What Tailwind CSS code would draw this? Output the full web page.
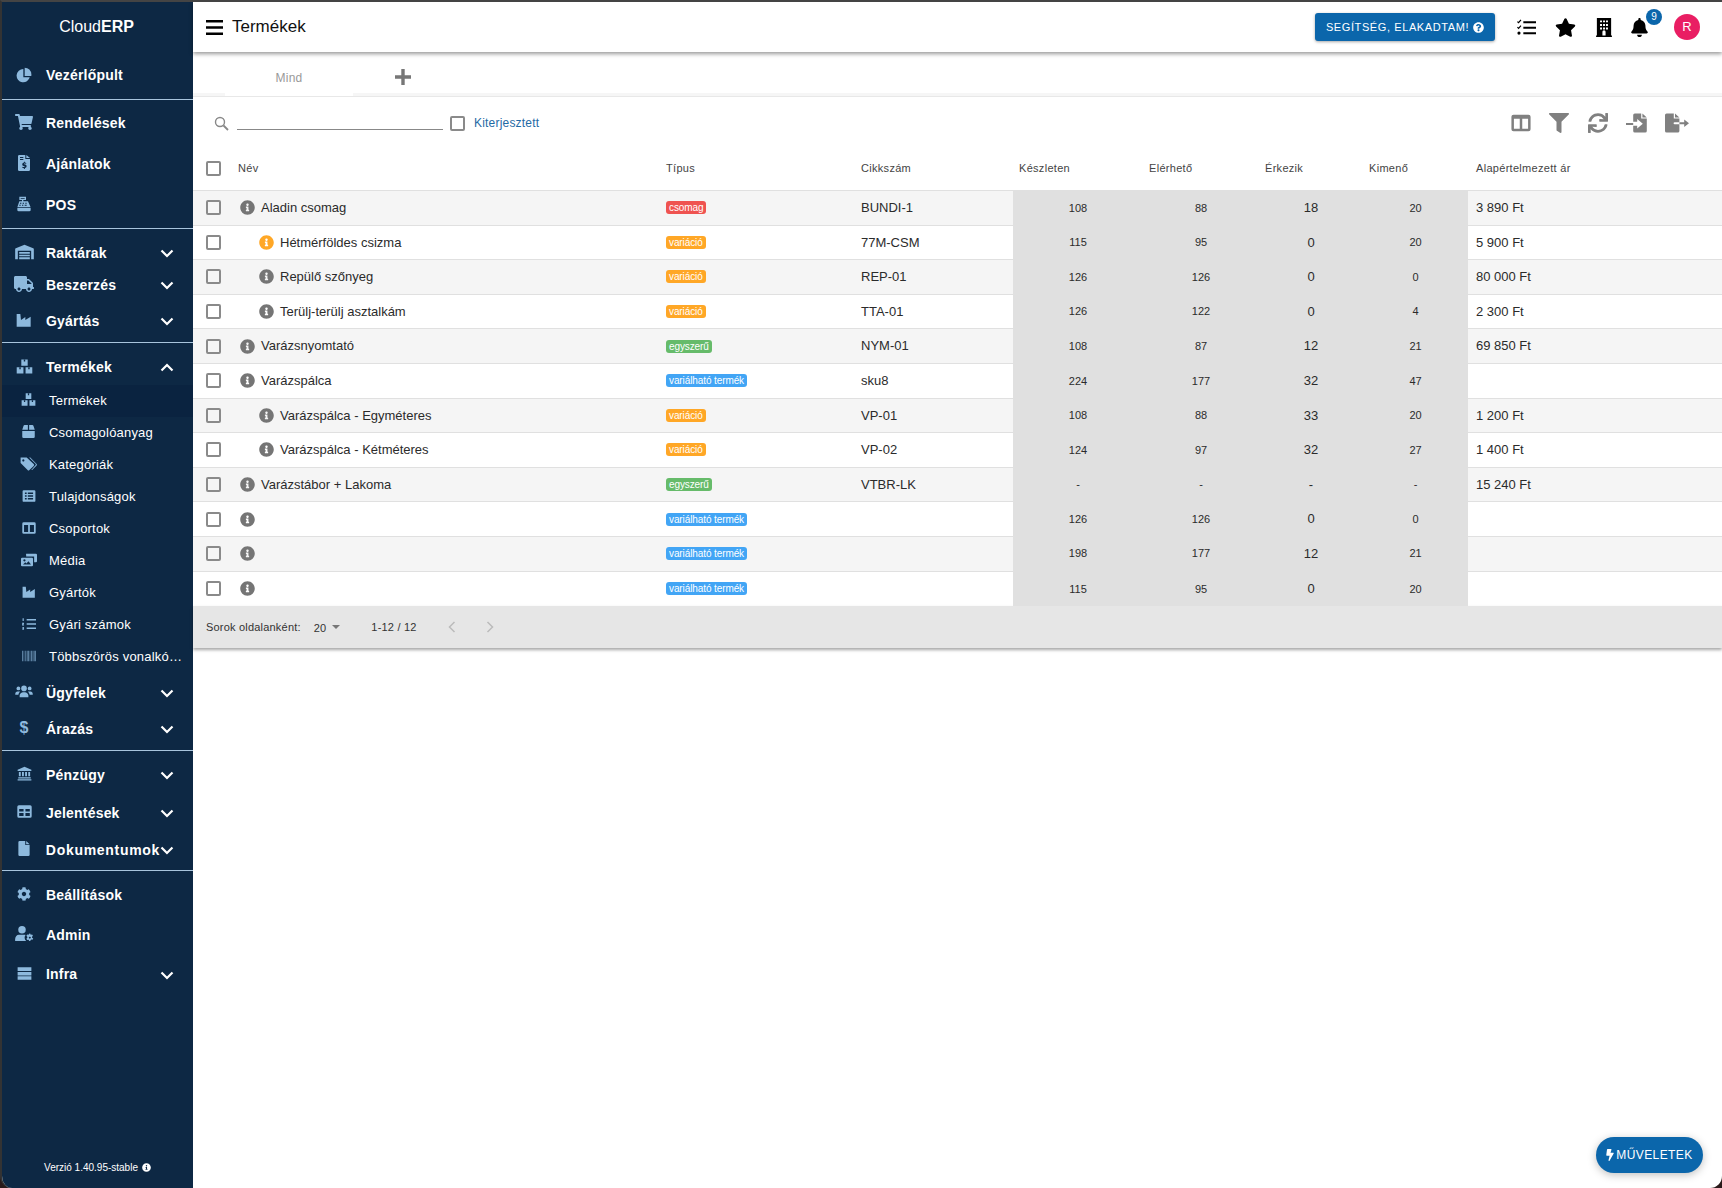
<!DOCTYPE html>
<html lang="hu">
<head>
<meta charset="UTF-8">
<title>CloudERP - Termékek</title>
<script src="https://cdn.jsdelivr.net/npm/@tailwindcss/browser@4"></script>
</head>
<body class="bg-[#2a1a1a] font-['Liberation_Sans',Arial,sans-serif] overflow-hidden">
<!-- icon sprite -->
<svg class="hidden">
<symbol id="info" viewBox="0 0 512 512"><path d="M256 8C119.043 8 8 119.083 8 256c0 136.997 111.043 248 248 248s248-111.003 248-248C504 119.083 392.957 8 256 8zm0 110c23.196 0 42 18.804 42 42s-18.804 42-42 42-42-18.804-42-42 18.804-42 42-42zm56 254c0 6.627-5.373 12-12 12h-88c-6.627 0-12-5.373-12-12v-24c0-6.627 5.373-12 12-12h12v-64h-12c-6.627 0-12-5.373-12-12v-24c0-6.627 5.373-12 12-12h64c6.627 0 12 5.373 12 12v100h12c6.627 0 12 5.373 12 12v24z"/></symbol>
<symbol id="star" viewBox="0 0 576 512"><path d="M259.3 17.8L194 150.2 47.9 171.5c-26.2 3.8-36.7 36.1-17.7 54.6l105.7 103-25 145.5c-4.5 26.3 23.2 46 46.4 33.7L288 439.6l130.7 68.7c23.2 12.2 50.9-7.4 46.4-33.7l-25-145.5 105.7-103c19-18.5 8.5-50.8-17.7-54.6L382 150.2 316.7 17.8c-11.7-23.6-45.6-23.9-57.4 0z"/></symbol>
<symbol id="bell" viewBox="0 0 448 512"><path d="M224 512c35.32 0 63.97-28.65 63.97-64H160.03c0 35.35 28.65 64 63.97 64zm215.39-149.71c-19.32-20.76-55.47-51.99-55.47-154.29 0-77.7-54.48-139.9-127.94-155.16V32c0-17.67-14.32-32-31.98-32s-31.98 14.33-31.98 32v20.84C118.56 68.1 64.08 130.3 64.08 208c0 102.3-36.15 133.53-55.47 154.29-6 6.45-8.66 14.16-8.61 21.71.11 16.4 12.98 32 32.1 32h383.8c19.12 0 32-15.6 32.1-32 .05-7.55-2.61-15.27-8.61-21.71z"/></symbol>
<symbol id="filter" viewBox="0 0 512 512"><path d="M487.976 0H24.028C2.71 0-8.047 25.866 7.058 40.971L192 225.941V432c0 7.831 3.821 15.17 10.237 19.662l80 55.98C298.02 518.69 320 507.493 320 487.98V225.941l184.947-184.97C520.021 25.896 509.338 0 487.976 0z"/></symbol>
<symbol id="cart" viewBox="0 0 576 512"><path d="M528.12 301.319l47.273-208C578.806 78.301 567.391 64 551.99 64H159.208l-9.166-44.81C147.758 8.021 137.93 0 126.529 0H24C10.745 0 0 10.745 0 24v16c0 13.255 10.745 24 24 24h69.883l70.248 343.435C147.325 417.1 136 435.222 136 456c0 30.928 25.072 56 56 56s56-25.072 56-56c0-15.674-6.447-29.835-16.824-40h209.647C430.447 426.165 424 440.326 424 456c0 30.928 25.072 56 56 56s56-25.072 56-56c0-22.172-12.888-41.332-31.579-50.405l5.517-24.276c3.413-15.018-8.002-29.319-23.403-29.319H218.117l-6.545-32h293.145c11.206 0 20.92-7.754 23.403-18.681z"/></symbol>
<symbol id="truck" viewBox="0 0 640 512"><path d="M624 352h-16V243.9c0-12.7-5.1-24.9-14.1-33.9L494 110.1c-9-9-21.2-14.1-33.9-14.1H416V48c0-26.5-21.5-48-48-48H48C21.5 0 0 21.5 0 48v320c0 26.5 21.5 48 48 48h16c0 53 43 96 96 96s96-43 96-96h128c0 53 43 96 96 96s96-43 96-96h48c8.8 0 16-7.2 16-16v-32c0-8.8-7.2-16-16-16zM160 464c-26.5 0-48-21.5-48-48s21.5-48 48-48 48 21.5 48 48-21.5 48-48 48zm320 0c-26.5 0-48-21.5-48-48s21.5-48 48-48 48 21.5 48 48-21.5 48-48 48zm80-208H416V144h44.1l99.9 99.9V256z"/></symbol>
<symbol id="sync" viewBox="0 0 512 512"><path d="M440.65 12.57l4 82.77A247.16 247.16 0 0 0 255.83 8C134.73 8 33.91 94.92 12.29 209.82A12 12 0 0 0 24.09 224h49.05a12 12 0 0 0 11.67-9.26 175.91 175.91 0 0 1 317-56.94l-101.46-4.86a12 12 0 0 0-12.57 12v47.41a12 12 0 0 0 12 12H500a12 12 0 0 0 12-12V12a12 12 0 0 0-12-12h-47.37a12 12 0 0 0-11.98 12.57zM255.83 432a175.61 175.61 0 0 1-146-77.8l101.8 4.87a12 12 0 0 0 12.57-12v-47.4a12 12 0 0 0-12-12H12a12 12 0 0 0-12 12V500a12 12 0 0 0 12 12h47.35a12 12 0 0 0 12-12.6l-4.15-82.57A247.17 247.17 0 0 0 255.83 504c121.11 0 221.93-86.92 243.55-201.82a12 12 0 0 0-11.8-14.18h-49.05a12 12 0 0 0-11.67 9.26A175.86 175.86 0 0 1 255.83 432z"/></symbol>
<symbol id="question" viewBox="0 0 512 512"><path d="M504 256c0 136.997-111.043 248-248 248S8 392.997 8 256C8 119.083 119.043 8 256 8s248 111.083 248 248zM262.655 90c-54.497 0-89.255 22.957-116.549 63.758-3.536 5.286-2.353 12.415 2.715 16.258l34.699 26.31c5.205 3.947 12.621 3.008 16.665-2.122 17.864-22.658 30.113-35.797 57.303-35.797 20.429 0 45.698 13.148 45.698 32.958 0 14.976-12.363 22.667-32.534 33.976C247.128 238.528 216 254.941 216 296v4c0 6.627 5.373 12 12 12h56c6.627 0 12-5.373 12-12v-1.333c0-28.462 83.186-29.647 83.186-106.667 0-58.002-60.165-102-116.531-102zM256 338c-25.365 0-46 20.635-46 46 0 25.364 20.635 46 46 46s46-20.636 46-46c0-25.365-20.635-46-46-46z"/></symbol>
<symbol id="bolt" viewBox="0 0 320 512"><path d="M296 160H180.6l42.6-129.8C227.2 15 215.7 0 200 0H56C44 0 33.8 8.9 32.2 20.8l-32 240C-1.7 275.2 9.5 288 24 288h118.7L96.6 482.5c-3.6 15.2 8 29.5 23.3 29.5 8.4 0 16.4-4.4 20.8-12l176-304c9.3-15.9-2.2-36-20.7-36z"/></symbol>
<symbol id="cog" viewBox="0 0 512 512"><path d="M487.4 315.7l-42.6-24.6c4.3-23.2 4.3-47 0-70.2l42.6-24.6c4.9-2.8 7.1-8.6 5.5-14-11.1-35.6-30-67.8-54.7-94.6-3.8-4.1-10-5.1-14.8-2.3L380.8 110c-17.9-15.4-38.5-27.3-60.8-35.1V25.8c0-5.6-3.9-10.5-9.4-11.7-36.7-8.2-74.3-7.8-109.2 0-5.5 1.2-9.4 6.1-9.4 11.7V75c-22.2 7.9-42.8 19.8-60.8 35.1L88.7 85.5c-4.9-2.8-11-1.9-14.8 2.3-24.7 26.7-43.6 58.9-54.7 94.6-1.7 5.4.6 11.2 5.5 14L67.3 221c-4.3 23.2-4.3 47 0 70.2l-42.6 24.6c-4.9 2.8-7.1 8.6-5.5 14 11.1 35.6 30 67.8 54.7 94.6 3.8 4.1 10 5.1 14.8 2.3l42.6-24.6c17.9 15.4 38.5 27.3 60.8 35.1v49.2c0 5.6 3.9 10.5 9.4 11.7 36.7 8.2 74.3 7.8 109.2 0 5.5-1.2 9.4-6.1 9.4-11.7v-49.2c22.2-7.9 42.8-19.8 60.8-35.1l42.6 24.6c4.9 2.8 11 1.9 14.8-2.3 24.7-26.7 43.6-58.9 54.7-94.6 1.5-5.5-.7-11.3-5.6-14.1zM256 336c-44.1 0-80-35.9-80-80s35.9-80 80-80 80 35.9 80 80-35.9 80-80 80z"/></symbol>
<symbol id="pie" viewBox="0 0 24 24"><path d="M11 3a10 10 0 1 0 9.6 12.5H11z"/><path d="M13 1a10 10 0 0 1 10 10v2.5H13z"/></symbol>
<symbol id="invoice" viewBox="0 0 18 24"><path fill-rule="evenodd" d="M2 0h9v6h7v16a2 2 0 0 1-2 2H2a2 2 0 0 1-2-2V2a2 2 0 0 1 2-2zM3 3v1.500h5V3zM3 6v1.500h5V6zM9 10v1.400c-1.700.3-2.600 1.400-2.600 2.700 0 3 4 2.100 4 3.300 0 .5-.7.7-1.400.7-.8 0-1.500-.3-2-.6l-.7 1.500c.6.400 1.500.7 2.700.8V21h1.300v-1.400c1.700-.3 2.600-1.400 2.600-2.700 0-3-4-2.200-4-3.300 0-.5.5-.7 1.200-.7.7 0 1.300.2 1.800.5l.7-1.500c-.6-.3-1.400-.6-2.300-.7V10z"/><path d="M12.500 0l5.500 4.600H12.500z"/></symbol>
<symbol id="register" viewBox="0 0 24 24"><path fill-rule="evenodd" d="M5 1h10v5H11v2h7l4 9H2l3-9h4V6H5zM7 3v1h6V3zM6 10v1.500h2V10zm4 0v1.500h2V10zm4 0v1.500h2V10zm-9 3v1.500h2V13zm4 0v1.500h2V13zm4 0v1.500h3V13z"/><path d="M2 18h20v3a2 2 0 0 1-2 2H4a2 2 0 0 1-2-2z"/></symbol>
<symbol id="warehouse" viewBox="0 0 28 24"><path fill-rule="evenodd" d="M14 1L27 6.500a1.500 1.500 0 0 1 1 1.400V23h-4V10H4v13H0V7.900a1.500 1.500 0 0 1 1-1.400zM6 12h16v2.500H6zm0 4h16v2.500H6zm0 4h16v3H6z"/></symbol>
<symbol id="industry" viewBox="0 0 24 24"><path d="M1 3h5.500l1 9L14 7.500V12l8-5v15H1z"/></symbol>
<symbol id="boxes" viewBox="0 0 24 24"><path d="M7.500 2h9v9h-9zM1 13h9.500v9H1zM13.500 13H23v9h-9.500z"/><path fill="#0d2844" d="M11 2h2v3h-2zM4.700 13h2v3h-2zM17.300 13h2v3h-2z"/></symbol>
<symbol id="box" viewBox="0 0 24 24"><path d="M2 9l2-6a2 2 0 0 1 2-1.500h5V9zM13 1.500h5a2 2 0 0 1 2 1.500l2 6h-9zM2 11h20v9.500a2 2 0 0 1-2 2H4a2 2 0 0 1-2-2z"/></symbol>
<symbol id="tags" viewBox="0 0 28 24"><path fill-rule="evenodd" d="M1 2h10l11.500 11a2 2 0 0 1 0 3l-7 6.500a2 2 0 0 1-3 0L1 11zM5.500 5a1.800 1.800 0 1 0 .01 0z"/><path d="M15 2h2l10 10.500a2 2 0 0 1 0 3l-7 7h-1.500l7-7.500a2 2 0 0 0 0-2.600z"/></symbol>
<symbol id="listalt" viewBox="0 0 24 24"><path fill-rule="evenodd" d="M3 2h18a2 2 0 0 1 2 2v16a2 2 0 0 1-2 2H3a2 2 0 0 1-2-2V4a2 2 0 0 1 2-2zM5 6v2.500h3V6zm5 0v2.500h9V6zm-5 4.700v2.500h3v-2.500zm5 0v2.500h9v-2.500zm-5 4.800V18h3v-2.500zm5 0V18h9v-2.500z"/></symbol>
<symbol id="columns" viewBox="0 0 24 24"><path fill-rule="evenodd" d="M3 2h18a2.500 2.500 0 0 1 2.500 2.500v15A2.500 2.500 0 0 1 21 22H3a2.500 2.500 0 0 1-2.500-2.500v-15A2.500 2.500 0 0 1 3 2zM3.500 7v12h7V7zm10 0v12h7V7z"/></symbol>
<symbol id="media" viewBox="0 0 28 24"><path d="M9 1h17a2 2 0 0 1 2 2v11a2 2 0 0 1-2 2h-3V6H9V3a2 2 0 0 1 0-2z"/><path fill-rule="evenodd" d="M2 8h17a2 2 0 0 1 2 2v11a2 2 0 0 1-2 2H2a2 2 0 0 1-2-2V10a2 2 0 0 1 2-2zm1.500 12h14l-4.500-6-3.500 4-2-2zM6 10.500a2 2 0 1 0 .01 0z"/></symbol>
<symbol id="listol" viewBox="0 0 24 24"><path d="M8 3.500h16v2.500H8zM8 10.800h16v2.500H8zM8 18h16v2.500H8zM1 2h2v5H1zM0 10h3.500v1.500l-1.500 1.500h1.500v1.500H0V13l1.500-1.500H0zM0 17h3.500v5H0v-1.200h2V20H0.500v-1H2v-.8H0z"/></symbol>
<symbol id="barcode" viewBox="0 0 24 24"><path d="M0 3h2v18H0zM3 3h1v18H3zM5.500 3h2v18h-2zM9 3h3v18H9zM13 3h1v18h-1zM15 3h3v18h-3zM19 3h1v18h-1zM21 3h3v18h-3z"/></symbol>
<symbol id="users" viewBox="0 0 28 24"><circle cx="14" cy="7" r="4.500"/><circle cx="5" cy="7" r="3"/><circle cx="23" cy="7" r="3"/><path d="M7 21v-2.500C7 15 10 13 12.500 13h3c2.500 0 5.500 2 5.500 5.500V21zM0 16c0-2.500 1.500-4 3.500-4h3c.4 0 .9.100 1.200.3-1.500 1.200-2.400 2.700-2.700 4.700H0zM28 16c0-2.500-1.500-4-3.500-4h-3c-.4 0-.9.100-1.200.3 1.500 1.200 2.400 2.700 2.700 4.700H28z"/></symbol>
<symbol id="bank" viewBox="0 0 24 24"><path d="M12 1l11 5v2H1V6zM3 9.500h3v7H3zM8 9.500h3v7H8zM13 9.500h3v7h-3zM18 9.500h3v7h-3zM2 18h20v2H2zM1 21h22v2H1z"/></symbol>
<symbol id="table" viewBox="0 0 24 24"><path fill-rule="evenodd" d="M3 2h18a2.500 2.500 0 0 1 2.500 2.500v15A2.500 2.500 0 0 1 21 22H3a2.500 2.500 0 0 1-2.500-2.500v-15A2.500 2.500 0 0 1 3 2zM3.500 8v4h7V8zm10 0v4h7V8zM3.500 14.500V19h7v-4.500zm10 0V19h7v-4.500z"/></symbol>
<symbol id="file" viewBox="0 0 18 24"><path d="M2 0h9v6.500h7V22a2 2 0 0 1-2 2H2a2 2 0 0 1-2-2V2a2 2 0 0 1 2-2zM12.500 0L18 5h-5.500z"/></symbol>
<symbol id="usercog" viewBox="0 0 30 24"><circle cx="11" cy="6" r="6"/><path d="M0 24v-3c0-4 3-7 6-7h9c.6 0 1.200.100 1.700.2a7 7 0 0 0 1 9.800z"/><path fill-rule="evenodd" d="M24 12l1 2 2.200-.5 1.300 2-1.500 1.700.1 1.500L29 20l-1.200 2-2.100-.5-1.700 2.500h-1.500l-1-2-2.100.5-1.400-2 1.500-1.800-.1-1.400-1.400-1.800 1.300-2 2.100.5L23 12zm-.5 5a1.500 1.500 0 1 0 .01 0z"/></symbol>
<symbol id="server" viewBox="0 0 24 24"><path d="M1 2h22v6H1zM1 9.500h22v5.500H1zM1 16.500h22V22H1z"/></symbol>
<symbol id="tasks" viewBox="0 0 24 24"><path d="M8 4h16v2.500H8zM8 11h16v2.500H8zM8 18h16v2.500H8z"/><path fill="none" stroke="currentColor" stroke-width="1.500" d="M.5 4.500l1.500 1.500 3-3.500M.5 11.500l1.500 1.500 3-3.500"/><circle cx="2.500" cy="19" r="2"/></symbol>
<symbol id="building" viewBox="0 0 20 24"><path fill-rule="evenodd" d="M1 0h18v22h1v2H0v-2h1zM5 3v2.500h2.500V3zm3.800 0v2.500h2.500V3zM12.500 3v2.500H15V3zM5 7.500V10h2.500V7.500zm3.800 0V10h2.500V7.500zm3.700 0V10H15V7.500zM5 12v2.500h2.500V12zm3.800 0v2.500h2.500V12zm3.700 0v2.500H15V12zM8 17.500V22h4v-4.500a2 2 0 0 0-4 0z"/></symbol>
<symbol id="fileimport" viewBox="0 0 30 24"><path d="M11 0h8v6.500h7V22a2 2 0 0 1-2 2H11a2 2 0 0 1-2-2v-6.500h5V19l7-6-7-6v3.500H9V2a2 2 0 0 1 2-2zM20.500 0L26 5h-5.500zM0 12h9v2.500H0z"/></symbol>
<symbol id="fileexport" viewBox="0 0 30 24"><path d="M2 0h9v6.500h7V11h-6a1.200 1.200 0 0 0 0 2.500h6V22a2 2 0 0 1-2 2H2a2 2 0 0 1-2-2V2a2 2 0 0 1 2-2zM12.500 0L18 5h-5.500z"/><path d="M18 11h6V7.500l6 4.700-6 4.800v-3.500h-6z"/></symbol>
</svg>

<div class="h-[1188px] w-[1722px] flex bg-white border-t-2 border-t-[#444] border-l-2 border-l-[#333] rounded-b-xl overflow-hidden">

<!-- sidebar -->
<aside class="w-[191px] shrink-0 h-full bg-[#0d2844] text-white flex flex-col text-[14px] font-bold tracking-[0.2px] fill-[#8db9dd] relative">
  <div class="h-[50px] flex items-center justify-center text-[16px] font-normal tracking-normal pr-[2px]">Cloud<b>ERP</b></div>

  <div class="h-[47px] flex items-center"><span class="w-[44px] flex justify-center pb-[1px]"><svg class="w-4 h-4"><use href="#pie"/></svg></span>Vezérlőpult</div>
  <div class="border-t border-[#a8c4dd] py-[2.5px]">
    <div class="h-[41px] flex items-center"><span class="w-[44px] flex justify-center pb-[3px]"><svg class="w-[18px] h-4"><use href="#cart"/></svg></span>Rendelések</div>
    <div class="h-[41px] flex items-center"><span class="w-[44px] flex justify-center pb-[3px]"><svg class="w-3 h-4"><use href="#invoice"/></svg></span>Ajánlatok</div>
    <div class="h-[41px] flex items-center"><span class="w-[44px] flex justify-center pb-[3px]"><svg class="w-4 h-4"><use href="#register"/></svg></span>POS</div>
  </div>
  <div class="border-t border-[#a8c4dd] pt-[8px] pb-[5px]">
    <div class="h-[32px] flex items-center pr-[19px]"><span class="w-[44px] flex justify-center pb-[2px]"><svg class="w-[19px] h-4"><use href="#warehouse"/></svg></span><span class="flex-1">Raktárak</span><svg class="w-[14px] h-[14px] stroke-white fill-none" viewBox="0 0 14 14"><path stroke-width="2.200" d="M1.500 4.500L7 10l5.500-5.500"/></svg></div>
    <div class="h-[32px] flex items-center pr-[19px]"><span class="w-[44px] flex justify-center pb-[3px]"><svg class="w-5 h-4"><use href="#truck"/></svg></span><span class="flex-1">Beszerzés</span><svg class="w-[14px] h-[14px] stroke-white fill-none" viewBox="0 0 14 14"><path stroke-width="2.200" d="M1.500 4.500L7 10l5.500-5.500"/></svg></div>
    <div class="h-[32px] mt-1 flex items-center pr-[19px]"><span class="w-[44px] flex justify-center pb-[3px]"><svg class="w-4 h-4"><use href="#industry"/></svg></span><span class="flex-1">Gyártás</span><svg class="w-[14px] h-[14px] stroke-white fill-none" viewBox="0 0 14 14"><path stroke-width="2.200" d="M1.500 4.500L7 10l5.500-5.500"/></svg></div>
  </div>
  <div class="border-t border-[#a8c4dd] pt-[7px] pb-[5px]">
    <div class="h-[35px] flex items-center pr-[19px]"><span class="w-[44px] flex justify-center pb-[3px]"><svg class="w-[17px] h-[17px]"><use href="#boxes"/></svg></span><span class="flex-1">Termékek</span><svg class="w-[14px] h-[14px] stroke-white fill-none" viewBox="0 0 14 14"><path stroke-width="2.200" d="M1.500 9.500L7 4l5.500 5.500"/></svg></div>
    <div class="text-[13px] font-normal">
      <div class="h-[32px] flex items-center bg-[#0a2340]"><span class="w-[41px] ml-[6px] flex justify-center pb-[3px]"><svg class="w-[15px] h-[15px]"><use href="#boxes"/></svg></span>Termékek</div>
      <div class="h-[32px] flex items-center"><span class="w-[41px] ml-[6px] flex justify-center pb-[3px]"><svg class="w-[15px] h-[15px]"><use href="#box"/></svg></span>Csomagolóanyag</div>
      <div class="h-[32px] flex items-center"><span class="w-[41px] ml-[6px] flex justify-center pb-[3px]"><svg class="w-[17px] h-[15px]"><use href="#tags"/></svg></span>Kategóriák</div>
      <div class="h-[32px] flex items-center"><span class="w-[41px] ml-[6px] flex justify-center pb-[3px]"><svg class="w-[14px] h-[14px]"><use href="#listalt"/></svg></span>Tulajdonságok</div>
      <div class="h-[32px] flex items-center"><span class="w-[41px] ml-[6px] flex justify-center pb-[3px]"><svg class="w-[14px] h-[14px]"><use href="#columns"/></svg></span>Csoportok</div>
      <div class="h-[32px] flex items-center"><span class="w-[41px] ml-[6px] flex justify-center pb-[3px]"><svg class="w-4 h-[14px]"><use href="#media"/></svg></span>Média</div>
      <div class="h-[32px] flex items-center"><span class="w-[41px] ml-[6px] flex justify-center pb-[3px]"><svg class="w-[14px] h-[14px]"><use href="#industry"/></svg></span>Gyártók</div>
      <div class="h-[32px] flex items-center"><span class="w-[41px] ml-[6px] flex justify-center pb-[3px]"><svg class="w-[14px] h-[14px]"><use href="#listol"/></svg></span>Gyári számok</div>
      <div class="h-[32px] flex items-center"><span class="w-[41px] ml-[6px] flex justify-center pb-[3px]"><svg class="w-[14px] h-[14px] opacity-60"><use href="#barcode"/></svg></span><span class="w-[134px] truncate">Többszörös vonalkódok</span></div>
    </div>
    <div class="h-[32px] mt-1 flex items-center pr-[19px]"><span class="w-[44px] flex justify-center pb-[3px]"><svg class="w-[18px] h-[15px]"><use href="#users"/></svg></span><span class="flex-1">Ügyfelek</span><svg class="w-[14px] h-[14px] stroke-white fill-none" viewBox="0 0 14 14"><path stroke-width="2.200" d="M1.500 4.500L7 10l5.500-5.500"/></svg></div>
    <div class="h-[32px] mt-1 flex items-center pr-[19px]"><span class="w-[44px] flex justify-center text-[#8db9dd] text-[16px] pb-[3px]">$</span><span class="flex-1">Árazás</span><svg class="w-[14px] h-[14px] stroke-white fill-none" viewBox="0 0 14 14"><path stroke-width="2.200" d="M1.500 4.500L7 10l5.500-5.500"/></svg></div>
  </div>
  <div class="border-t border-[#a8c4dd] pt-[5px] pb-[2px]">
    <div class="h-[38px] flex items-center pr-[19px]"><span class="w-[44px] flex justify-center pb-[3px]"><svg class="w-[15px] h-[15px]"><use href="#bank"/></svg></span><span class="flex-1">Pénzügy</span><svg class="w-[14px] h-[14px] stroke-white fill-none" viewBox="0 0 14 14"><path stroke-width="2.200" d="M1.500 4.500L7 10l5.500-5.500"/></svg></div>
    <div class="h-[38px] flex items-center pr-[19px]"><span class="w-[44px] flex justify-center pb-[3px]"><svg class="w-[15px] h-[15px]"><use href="#table"/></svg></span><span class="flex-1">Jelentések</span><svg class="w-[14px] h-[14px] stroke-white fill-none" viewBox="0 0 14 14"><path stroke-width="2.200" d="M1.500 4.500L7 10l5.500-5.500"/></svg></div>
    <div class="h-[36px] flex items-center pr-[19px]"><span class="w-[44px] flex justify-center pb-[3px]"><svg class="w-3 h-[15px]"><use href="#file"/></svg></span><span class="flex-1 tracking-[0.7px]">Dokumentumok</span><svg class="w-[14px] h-[14px] stroke-white fill-none" viewBox="0 0 14 14"><path stroke-width="2.200" d="M1.500 4.500L7 10l5.500-5.500"/></svg></div>
  </div>
  <div class="border-t border-[#a8c4dd] pt-[4px]">
    <div class="h-[40px] flex items-center"><span class="w-[44px] flex justify-center pb-[3px]"><svg class="w-[14px] h-[14px]"><use href="#cog"/></svg></span>Beállítások</div>
    <div class="h-[40px] flex items-center"><span class="w-[44px] flex justify-center pb-[3px]"><svg class="w-[19px] h-[15px]"><use href="#usercog"/></svg></span>Admin</div>
    <div class="h-[39px] flex items-center pr-[19px]"><span class="w-[44px] flex justify-center pb-[3px]"><svg class="w-[15px] h-[15px]"><use href="#server"/></svg></span><span class="flex-1">Infra</span><svg class="w-[14px] h-[14px] stroke-white fill-none" viewBox="0 0 14 14"><path stroke-width="2.200" d="M1.500 4.500L7 10l5.500-5.500"/></svg></div>
  </div>
  <div class="mt-auto mb-[13px] flex items-center justify-center gap-1 text-[10px] font-normal fill-white tracking-normal">Verzió 1.40.95-stable <svg class="w-[9px] h-[9px]"><use href="#info"/></svg></div>
</aside>

<main class="flex-1 min-w-0 flex flex-col relative">
  <!-- topbar -->
  <header class="h-[50px] shrink-0 bg-white shadow-[0_2px_4px_rgba(0,0,0,0.4)] flex items-center pl-[13px] pr-[22px] z-10">
    <svg class="w-[17px] h-[15px]" viewBox="0 0 17 15"><path d="M0 0h17v2.600H0zM0 6.200h17v2.600H0zM0 12.400h17V15H0z"/></svg>
    <h1 class="ml-[9px] text-[17px] text-[#111]">Termékek</h1>
    <button class="ml-auto h-[28px] w-[180px] rounded-[3px] bg-[#0b66ab] text-white text-[11px] tracking-[0.6px] flex items-center justify-center gap-1 shadow-[0_1px_3px_rgba(0,0,0,0.35)] fill-white">SEGÍTSÉG, ELAKADTAM! <svg class="w-[11px] h-[11px]"><use href="#question"/></svg></button>
    <svg class="ml-[22px] w-[19px] h-[19px] text-black"><use href="#tasks"/></svg>
    <svg class="ml-[19px] w-[21px] h-[19px]"><use href="#star"/></svg>
    <svg class="ml-[20px] w-4 h-[19px]"><use href="#building"/></svg>
    <div class="ml-[19px] relative">
      <svg class="w-[17px] h-[19px] block"><use href="#bell"/></svg>
      <span class="absolute -top-[9px] left-[15px] w-4 h-4 rounded-full bg-[#0b66ab] text-white text-[10px] flex items-center justify-center">9</span>
    </div>
    <span class="ml-[26px] w-[26px] h-[26px] rounded-full bg-[#e91e63] text-white text-[13px] flex items-center justify-center">R</span>
  </header>

  <!-- tabs -->
  <div class="h-[45px] shrink-0 flex border-b border-[#e8e8e8]">
    <div class="flex-1 flex">
      <div class="w-[32px] mt-[41px] bg-[#f6f6f6]"></div>
      <div class="w-[128px] h-[44px] pt-[8px] flex items-center justify-center text-[12px] text-[#999] bg-white tracking-[0.2px]">Mind</div>
      <div class="flex-1 relative">
        <div class="absolute inset-x-0 bottom-0 h-[3px] bg-[#f6f6f6]"></div>
        <svg class="ml-[42px] mt-[17px] w-4 h-4 fill-[#777]" viewBox="0 0 16 16"><path d="M6.300 0h3.400v6.300H16v3.400H9.700V16H6.300V9.700H0V6.300h6.300z"/></svg>
      </div>
    </div>
  </div>

  <!-- toolbar -->
  <div class="h-[53px] shrink-0 flex items-center pl-[21px] pr-[33px] pb-[1px] fill-[#808080]">
    <svg class="w-[15px] h-[15px] stroke-[#888] fill-none" viewBox="0 0 15 15"><circle cx="6" cy="6" r="4.500" stroke-width="1.400"/><path d="M9.500 9.500L14 14" stroke-width="1.800"/></svg>
    <div class="ml-[8px] w-[206px] h-[22px] border-b border-[#888] self-start mt-[11px]"></div>
    <span class="ml-[7px] w-[15px] h-[15px] rounded-[2px] border-2 border-[#8a8a8a]"></span>
    <span class="ml-[9px] text-[12px] text-[#1f6aa5] tracking-[0.2px]">Kiterjesztett</span>
    <svg class="ml-auto w-5 h-5"><use href="#columns"/></svg>
    <svg class="ml-[18px] w-5 h-5"><use href="#filter"/></svg>
    <svg class="ml-[19px] w-5 h-5"><use href="#sync"/></svg>
    <svg class="ml-[18px] w-6 h-5"><use href="#fileimport"/></svg>
    <svg class="ml-[15px] w-6 h-5"><use href="#fileexport"/></svg>
  </div>

  <!-- table -->
  <section class="text-[13px] text-[#2b2b2b] fill-[#757575]">
    <div class="h-[41px] pb-[3px] grid grid-cols-[45px_428px_195px_152px_130px_116px_104px_105px_1fr] items-center border-b border-[#e0e0e0] text-[11px] text-[#444] tracking-[0.3px]">
      <span class="ml-[13px] w-[15px] h-[15px] rounded-[2px] border-2 border-[#8a8a8a]"></span><span>Név</span><span>Típus</span><span>Cikkszám</span><span class="pl-[6px]">Készleten</span><span class="pl-[6px]">Elérhető</span><span class="pl-[6px]">Érkezik</span><span class="pl-[6px]">Kimenő</span><span class="pl-2">Alapértelmezett ár</span>
    </div>

    <div class="h-[34.6px] grid grid-cols-[45px_428px_195px_152px_130px_116px_104px_105px_1fr] items-stretch border-b border-[#e0e0e0] bg-[#f5f5f5]">
      <div class="flex items-center"><span class="ml-[13px] w-[15px] h-[15px] rounded-[2px] border-2 border-[#8a8a8a]"></span></div>
      <div class="flex items-center"><svg class="ml-[2px] w-[15px] h-[15px]"><use href="#info"/></svg><span class="ml-[6px]">Aladin csomag</span></div>
      <div class="flex items-center"><span class="h-[13px] px-[3px] rounded-[3px] bg-[#ef5350] text-white text-[10px] leading-[13px] tracking-[-0.1px]">csomag</span></div>
      <div class="flex items-center">BUNDI-1</div>
      <div class="flex items-center justify-center bg-[#e0e0e0] text-[11px]">108</div><div class="flex items-center justify-center bg-[#e0e0e0] text-[11px]">88</div><div class="flex items-center justify-center bg-[#e0e0e0]">18</div><div class="flex items-center justify-center bg-[#e0e0e0] text-[11px]">20</div>
      <div class="flex items-center pl-2">3 890 Ft</div>
    </div>
    <div class="h-[34.6px] grid grid-cols-[45px_428px_195px_152px_130px_116px_104px_105px_1fr] items-stretch border-b border-[#e0e0e0]">
      <div class="flex items-center"><span class="ml-[13px] w-[15px] h-[15px] rounded-[2px] border-2 border-[#8a8a8a]"></span></div>
      <div class="flex items-center pl-[19px]"><svg class="ml-[2px] w-[15px] h-[15px] fill-[#ffa726]"><use href="#info"/></svg><span class="ml-[6px]">Hétmérföldes csizma</span></div>
      <div class="flex items-center"><span class="h-[13px] px-[3px] rounded-[3px] bg-[#ffa726] text-white text-[10px] leading-[13px] tracking-[-0.1px]">variáció</span></div>
      <div class="flex items-center">77M-CSM</div>
      <div class="flex items-center justify-center bg-[#e0e0e0] text-[11px]">115</div><div class="flex items-center justify-center bg-[#e0e0e0] text-[11px]">95</div><div class="flex items-center justify-center bg-[#e0e0e0]">0</div><div class="flex items-center justify-center bg-[#e0e0e0] text-[11px]">20</div>
      <div class="flex items-center pl-2">5 900 Ft</div>
    </div>
    <div class="h-[34.6px] grid grid-cols-[45px_428px_195px_152px_130px_116px_104px_105px_1fr] items-stretch border-b border-[#e0e0e0] bg-[#f5f5f5]">
      <div class="flex items-center"><span class="ml-[13px] w-[15px] h-[15px] rounded-[2px] border-2 border-[#8a8a8a]"></span></div>
      <div class="flex items-center pl-[19px]"><svg class="ml-[2px] w-[15px] h-[15px]"><use href="#info"/></svg><span class="ml-[6px]">Repülő szőnyeg</span></div>
      <div class="flex items-center"><span class="h-[13px] px-[3px] rounded-[3px] bg-[#ffa726] text-white text-[10px] leading-[13px] tracking-[-0.1px]">variáció</span></div>
      <div class="flex items-center">REP-01</div>
      <div class="flex items-center justify-center bg-[#e0e0e0] text-[11px]">126</div><div class="flex items-center justify-center bg-[#e0e0e0] text-[11px]">126</div><div class="flex items-center justify-center bg-[#e0e0e0]">0</div><div class="flex items-center justify-center bg-[#e0e0e0] text-[11px]">0</div>
      <div class="flex items-center pl-2">80 000 Ft</div>
    </div>
    <div class="h-[34.6px] grid grid-cols-[45px_428px_195px_152px_130px_116px_104px_105px_1fr] items-stretch border-b border-[#e0e0e0]">
      <div class="flex items-center"><span class="ml-[13px] w-[15px] h-[15px] rounded-[2px] border-2 border-[#8a8a8a]"></span></div>
      <div class="flex items-center pl-[19px]"><svg class="ml-[2px] w-[15px] h-[15px]"><use href="#info"/></svg><span class="ml-[6px]">Terülj-terülj asztalkám</span></div>
      <div class="flex items-center"><span class="h-[13px] px-[3px] rounded-[3px] bg-[#ffa726] text-white text-[10px] leading-[13px] tracking-[-0.1px]">variáció</span></div>
      <div class="flex items-center">TTA-01</div>
      <div class="flex items-center justify-center bg-[#e0e0e0] text-[11px]">126</div><div class="flex items-center justify-center bg-[#e0e0e0] text-[11px]">122</div><div class="flex items-center justify-center bg-[#e0e0e0]">0</div><div class="flex items-center justify-center bg-[#e0e0e0] text-[11px]">4</div>
      <div class="flex items-center pl-2">2 300 Ft</div>
    </div>
    <div class="h-[34.6px] grid grid-cols-[45px_428px_195px_152px_130px_116px_104px_105px_1fr] items-stretch border-b border-[#e0e0e0] bg-[#f5f5f5]">
      <div class="flex items-center"><span class="ml-[13px] w-[15px] h-[15px] rounded-[2px] border-2 border-[#8a8a8a]"></span></div>
      <div class="flex items-center"><svg class="ml-[2px] w-[15px] h-[15px]"><use href="#info"/></svg><span class="ml-[6px]">Varázsnyomtató</span></div>
      <div class="flex items-center"><span class="h-[13px] px-[3px] rounded-[3px] bg-[#66bb6a] text-white text-[10px] leading-[13px] tracking-[-0.1px]">egyszerű</span></div>
      <div class="flex items-center">NYM-01</div>
      <div class="flex items-center justify-center bg-[#e0e0e0] text-[11px]">108</div><div class="flex items-center justify-center bg-[#e0e0e0] text-[11px]">87</div><div class="flex items-center justify-center bg-[#e0e0e0]">12</div><div class="flex items-center justify-center bg-[#e0e0e0] text-[11px]">21</div>
      <div class="flex items-center pl-2">69 850 Ft</div>
    </div>
    <div class="h-[34.6px] grid grid-cols-[45px_428px_195px_152px_130px_116px_104px_105px_1fr] items-stretch border-b border-[#e0e0e0]">
      <div class="flex items-center"><span class="ml-[13px] w-[15px] h-[15px] rounded-[2px] border-2 border-[#8a8a8a]"></span></div>
      <div class="flex items-center"><svg class="ml-[2px] w-[15px] h-[15px]"><use href="#info"/></svg><span class="ml-[6px]">Varázspálca</span></div>
      <div class="flex items-center"><span class="h-[13px] px-[3px] rounded-[3px] bg-[#42a5f5] text-white text-[10px] leading-[13px] tracking-[-0.1px]">variálható termék</span></div>
      <div class="flex items-center">sku8</div>
      <div class="flex items-center justify-center bg-[#e0e0e0] text-[11px]">224</div><div class="flex items-center justify-center bg-[#e0e0e0] text-[11px]">177</div><div class="flex items-center justify-center bg-[#e0e0e0]">32</div><div class="flex items-center justify-center bg-[#e0e0e0] text-[11px]">47</div>
      <div></div>
    </div>
    <div class="h-[34.6px] grid grid-cols-[45px_428px_195px_152px_130px_116px_104px_105px_1fr] items-stretch border-b border-[#e0e0e0] bg-[#f5f5f5]">
      <div class="flex items-center"><span class="ml-[13px] w-[15px] h-[15px] rounded-[2px] border-2 border-[#8a8a8a]"></span></div>
      <div class="flex items-center pl-[19px]"><svg class="ml-[2px] w-[15px] h-[15px]"><use href="#info"/></svg><span class="ml-[6px]">Varázspálca - Egyméteres</span></div>
      <div class="flex items-center"><span class="h-[13px] px-[3px] rounded-[3px] bg-[#ffa726] text-white text-[10px] leading-[13px] tracking-[-0.1px]">variáció</span></div>
      <div class="flex items-center">VP-01</div>
      <div class="flex items-center justify-center bg-[#e0e0e0] text-[11px]">108</div><div class="flex items-center justify-center bg-[#e0e0e0] text-[11px]">88</div><div class="flex items-center justify-center bg-[#e0e0e0]">33</div><div class="flex items-center justify-center bg-[#e0e0e0] text-[11px]">20</div>
      <div class="flex items-center pl-2">1 200 Ft</div>
    </div>
    <div class="h-[34.6px] grid grid-cols-[45px_428px_195px_152px_130px_116px_104px_105px_1fr] items-stretch border-b border-[#e0e0e0]">
      <div class="flex items-center"><span class="ml-[13px] w-[15px] h-[15px] rounded-[2px] border-2 border-[#8a8a8a]"></span></div>
      <div class="flex items-center pl-[19px]"><svg class="ml-[2px] w-[15px] h-[15px]"><use href="#info"/></svg><span class="ml-[6px]">Varázspálca - Kétméteres</span></div>
      <div class="flex items-center"><span class="h-[13px] px-[3px] rounded-[3px] bg-[#ffa726] text-white text-[10px] leading-[13px] tracking-[-0.1px]">variáció</span></div>
      <div class="flex items-center">VP-02</div>
      <div class="flex items-center justify-center bg-[#e0e0e0] text-[11px]">124</div><div class="flex items-center justify-center bg-[#e0e0e0] text-[11px]">97</div><div class="flex items-center justify-center bg-[#e0e0e0]">32</div><div class="flex items-center justify-center bg-[#e0e0e0] text-[11px]">27</div>
      <div class="flex items-center pl-2">1 400 Ft</div>
    </div>
    <div class="h-[34.6px] grid grid-cols-[45px_428px_195px_152px_130px_116px_104px_105px_1fr] items-stretch border-b border-[#e0e0e0] bg-[#f5f5f5]">
      <div class="flex items-center"><span class="ml-[13px] w-[15px] h-[15px] rounded-[2px] border-2 border-[#8a8a8a]"></span></div>
      <div class="flex items-center"><svg class="ml-[2px] w-[15px] h-[15px]"><use href="#info"/></svg><span class="ml-[6px]">Varázstábor + Lakoma</span></div>
      <div class="flex items-center"><span class="h-[13px] px-[3px] rounded-[3px] bg-[#66bb6a] text-white text-[10px] leading-[13px] tracking-[-0.1px]">egyszerű</span></div>
      <div class="flex items-center">VTBR-LK</div>
      <div class="flex items-center justify-center bg-[#e0e0e0] text-[11px]">-</div><div class="flex items-center justify-center bg-[#e0e0e0] text-[11px]">-</div><div class="flex items-center justify-center bg-[#e0e0e0]">-</div><div class="flex items-center justify-center bg-[#e0e0e0] text-[11px]">-</div>
      <div class="flex items-center pl-2">15 240 Ft</div>
    </div>
    <div class="h-[34.6px] grid grid-cols-[45px_428px_195px_152px_130px_116px_104px_105px_1fr] items-stretch border-b border-[#e0e0e0]">
      <div class="flex items-center"><span class="ml-[13px] w-[15px] h-[15px] rounded-[2px] border-2 border-[#8a8a8a]"></span></div>
      <div class="flex items-center"><svg class="ml-[2px] w-[15px] h-[15px]"><use href="#info"/></svg></div>
      <div class="flex items-center"><span class="h-[13px] px-[3px] rounded-[3px] bg-[#42a5f5] text-white text-[10px] leading-[13px] tracking-[-0.1px]">variálható termék</span></div>
      <div></div>
      <div class="flex items-center justify-center bg-[#e0e0e0] text-[11px]">126</div><div class="flex items-center justify-center bg-[#e0e0e0] text-[11px]">126</div><div class="flex items-center justify-center bg-[#e0e0e0]">0</div><div class="flex items-center justify-center bg-[#e0e0e0] text-[11px]">0</div>
      <div></div>
    </div>
    <div class="h-[34.6px] grid grid-cols-[45px_428px_195px_152px_130px_116px_104px_105px_1fr] items-stretch border-b border-[#e0e0e0] bg-[#f5f5f5]">
      <div class="flex items-center"><span class="ml-[13px] w-[15px] h-[15px] rounded-[2px] border-2 border-[#8a8a8a]"></span></div>
      <div class="flex items-center"><svg class="ml-[2px] w-[15px] h-[15px]"><use href="#info"/></svg></div>
      <div class="flex items-center"><span class="h-[13px] px-[3px] rounded-[3px] bg-[#42a5f5] text-white text-[10px] leading-[13px] tracking-[-0.1px]">variálható termék</span></div>
      <div></div>
      <div class="flex items-center justify-center bg-[#e0e0e0] text-[11px]">198</div><div class="flex items-center justify-center bg-[#e0e0e0] text-[11px]">177</div><div class="flex items-center justify-center bg-[#e0e0e0]">12</div><div class="flex items-center justify-center bg-[#e0e0e0] text-[11px]">21</div>
      <div></div>
    </div>
    <div class="h-[34.6px] grid grid-cols-[45px_428px_195px_152px_130px_116px_104px_105px_1fr] items-stretch">
      <div class="flex items-center"><span class="ml-[13px] w-[15px] h-[15px] rounded-[2px] border-2 border-[#8a8a8a]"></span></div>
      <div class="flex items-center"><svg class="ml-[2px] w-[15px] h-[15px]"><use href="#info"/></svg></div>
      <div class="flex items-center"><span class="h-[13px] px-[3px] rounded-[3px] bg-[#42a5f5] text-white text-[10px] leading-[13px] tracking-[-0.1px]">variálható termék</span></div>
      <div></div>
      <div class="flex items-center justify-center bg-[#e0e0e0] text-[11px]">115</div><div class="flex items-center justify-center bg-[#e0e0e0] text-[11px]">95</div><div class="flex items-center justify-center bg-[#e0e0e0]">0</div><div class="flex items-center justify-center bg-[#e0e0e0] text-[11px]">20</div>
      <div></div>
    </div>

    <!-- pagination -->
    <div class="h-[42px] flex items-center bg-[#e6e6e6] pl-[13px] text-[11px] text-[#333] tracking-[0.2px] shadow-[0_2px_3px_rgba(0,0,0,0.35)]">
      <span>Sorok oldalanként:</span>
      <span class="ml-[13px] pt-[2px]">20</span>
      <svg class="ml-[6px] w-2 h-1 fill-[#777]" viewBox="0 0 8 4"><path d="M0 0h8L4 4z"/></svg>
      <span class="ml-[31px]">1-12 / 12</span>
      <svg class="ml-[28px] w-[14px] h-[14px] stroke-[#bbb] fill-none" viewBox="0 0 14 14"><path stroke-width="1.500" d="M9.500 2L4.500 7l5 5"/></svg>
      <svg class="ml-[24px] w-[14px] h-[14px] stroke-[#bbb] fill-none" viewBox="0 0 14 14"><path stroke-width="1.500" d="M4.500 2l5 5-5 5"/></svg>
    </div>
  </section>

  <button class="absolute right-[19px] bottom-[15px] h-[36px] w-[107px] rounded-full bg-[#0b66ab] text-white text-[12px] tracking-[0.4px] flex items-center justify-center gap-[2px] fill-white shadow-[0_2px_8px_rgba(0,0,0,0.25)]"><svg class="w-[8px] h-[12px]"><use href="#bolt"/></svg>MŰVELETEK</button>
</main>
</div>
</body>
</html>
